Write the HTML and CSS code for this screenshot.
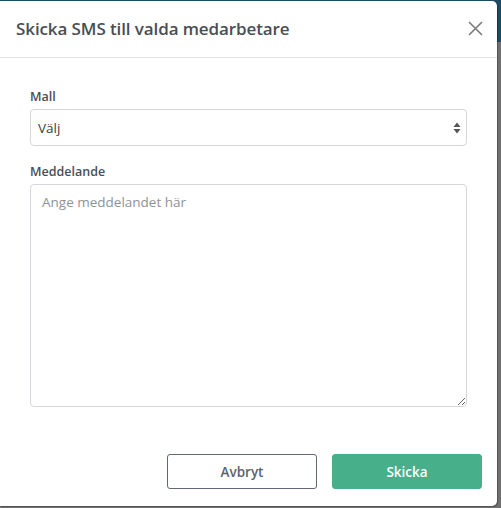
FILE: index.html
```html
<!DOCTYPE html>
<html lang="sv">
<head>
<meta charset="utf-8">
<title>Skicka SMS</title>
<link rel="stylesheet" href="styles.css">
</head>
<body>
<div class="modal">
  <div class="modal-header">
    <h1 class="modal-title">Skicka SMS till valda medarbetare</h1>
    <button class="close" type="button" aria-label="Stäng">
      <svg width="15" height="15" viewBox="0 0 15 15"><path d="M1 1 L14 14 M14 1 L1 14" stroke="#7a7a7a" stroke-width="1.6" fill="none"/></svg>
    </button>
  </div>
  <div class="modal-body">
    <label class="field-label" for="mall">Mall</label>
    <div class="select-wrap">
      <select id="mall" class="select"><option>Välj</option></select>
      <svg class="select-arrows" width="8" height="12" viewBox="0 0 8 12"><path d="M4 0.5 L7.5 5 L0.5 5 Z M0.5 7 L7.5 7 L4 11.5 Z" fill="#555"/></svg>
    </div>
    <label class="field-label second" for="msg">Meddelande</label>
    <textarea id="msg" class="textarea" placeholder="Ange meddelandet här"></textarea>
  </div>
  <div class="modal-footer">
    <button class="btn btn-outline" type="button">Avbryt</button>
    <button class="btn btn-primary" type="button">Skicka</button>
  </div>
</div>
</body>
</html>
```
FILE: styles.css
```css
html, body {
  margin: 0;
  padding: 0;
}
body {
  width: 501px;
  height: 508px;
  overflow: hidden;
  background: linear-gradient(to bottom, #1d4a64 0, #1d4a64 42px, #707070 42px, #707070 100%);
  font-family: "Open Sans", "Liberation Sans", sans-serif;
}
.modal {
  margin-top: 1px;
  width: 497px;
  height: 505px;
  background: #fff;
  border-radius: 0 5px 5px 0;
  box-shadow: 1px 1px 0 rgba(0,0,0,0.25);
  display: flex;
  flex-direction: column;
}
.modal-header {
  height: 56px;
  border-bottom: 1px solid #e6e6e6;
  display: flex;
  align-items: center;
  justify-content: space-between;
  padding: 0 14px 0 16px;
}
.modal-title {
  margin: 0;
  font-size: 17px;
  font-weight: 600;
  color: #494e55;
  letter-spacing: -0.1px;
  position: relative;
  top: -1px;
}
.close {
  border: 0;
  background: none;
  padding: 0;
  width: 16px;
  height: 16px;
  display: flex;
  align-items: center;
  justify-content: center;
  cursor: pointer;
  position: relative;
  top: -1px;
}
.modal-body {
  padding: 30px 30px 0 30px;
  display: flex;
  flex-direction: column;
}
.field-label {
  font-size: 12.5px;
  font-weight: 600;
  color: #4a4f56;
  line-height: 18px;
  margin-bottom: 3px;
}
.field-label.second {
  margin-top: 17px;
}
.select-wrap {
  position: relative;
}
.select {
  appearance: none;
  -webkit-appearance: none;
  width: 100%;
  height: 37px;
  box-sizing: border-box;
  border: 1px solid #d3d6da;
  border-radius: 4px;
  background: #fff;
  padding: 0 7px;
  font-family: inherit;
  font-size: 13.5px;
  color: #3a3f45;
  outline: none;
}
.select-arrows {
  position: absolute;
  right: 6px;
  top: 13px;
  pointer-events: none;
}
.textarea {
  width: 100%;
  height: 223px;
  box-sizing: border-box;
  border: 1px solid #d3d6da;
  border-radius: 4px;
  padding: 8px 11px;
  font-family: inherit;
  font-size: 13.5px;
  color: #3a3f45;
  resize: both;
  outline: none;
}
.textarea::placeholder {
  color: #8e9297;
}
.modal-footer {
  margin-top: auto;
  padding: 0 15px 17px 0;
  display: flex;
  justify-content: flex-end;
  gap: 15px;
}
.btn {
  width: 150px;
  height: 35px;
  border-radius: 3px;
  font-family: inherit;
  font-size: 13.5px;
  font-weight: 600;
  cursor: pointer;
}
.btn-outline {
  background: #fff;
  border: 1px solid #5f6874;
  color: #5b636e;
}
.btn-primary {
  background: #47b08b;
  border: 1px solid #47b08b;
  color: #fff;
}
```
